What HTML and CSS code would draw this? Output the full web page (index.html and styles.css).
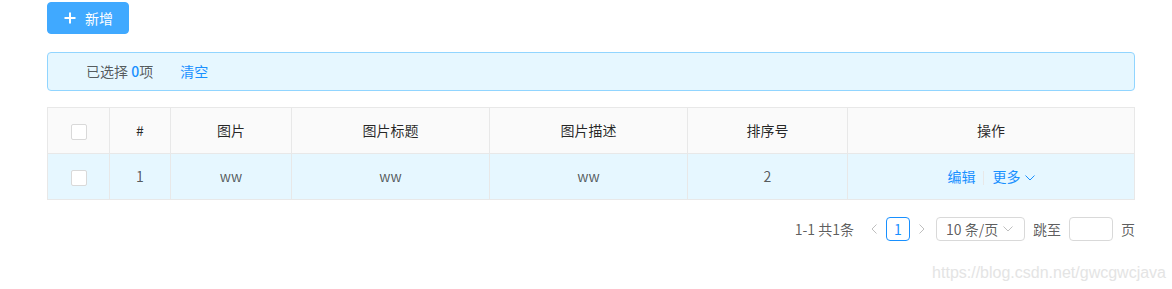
FILE: index.html
```html
<!DOCTYPE html>
<html lang="zh-CN">
<head>
  <meta charset="UTF-8" />
  <title>图片管理</title>
  <link rel="stylesheet" href="styles.css">
</head>
<body>
  <div class="page">
    <div class="toolbar">
      <button class="btn-primary">
        <svg class="icon-plus" width="12" height="12" viewBox="0 0 12 12"><path d="M6 0.5v11M0.5 6h11" stroke="#fff" stroke-width="2" fill="none"/></svg>
        <span>新增</span>
      </button>
    </div>

    <div class="alert">
      已选择 <a class="count">0</a>项
      <a class="link clear">清空</a>
    </div>

    <table class="grid">
      <colgroup>
        <col style="width:62px"><col style="width:61px"><col style="width:121px"><col style="width:198px"><col style="width:198px"><col style="width:160px"><col>
      </colgroup>
      <thead>
        <tr>
          <th><span class="checkbox"></span></th>
          <th>#</th>
          <th>图片</th>
          <th>图片标题</th>
          <th>图片描述</th>
          <th>排序号</th>
          <th>操作</th>
        </tr>
      </thead>
      <tbody>
        <tr class="selected">
          <td><span class="checkbox"></span></td>
          <td>1</td>
          <td>ww</td>
          <td>ww</td>
          <td>ww</td>
          <td>2</td>
          <td>
            <a class="link">编辑</a><span class="divider"></span><a class="link">更多
              <svg class="icon-down" width="10" height="6" viewBox="0 0 10 6"><polyline points="0.5,0.5 5,5 9.5,0.5" stroke="#1890ff" stroke-width="1" fill="none"/></svg></a>
          </td>
        </tr>
      </tbody>
    </table>

    <div class="pagination">
      <span class="total">1-1 共1条</span>
      <span class="pager-arrow">
        <svg width="6" height="10" viewBox="0 0 6 10"><polyline points="5.5,0.5 1,5 5.5,9.5" stroke="#bfbfbf" fill="none"/></svg>
      </span>
      <span class="pager-item active">1</span>
      <span class="pager-arrow">
        <svg width="6" height="10" viewBox="0 0 6 10"><polyline points="0.5,0.5 5,5 0.5,9.5" stroke="#bfbfbf" fill="none"/></svg>
      </span>
      <span class="size-select">10 条/页
        <svg width="10" height="6" viewBox="0 0 10 6"><polyline points="0.5,0.5 5,5 9.5,0.5" stroke="#bfbfbf" fill="none"/></svg>
      </span>
      <span class="jumper">跳至<input type="text" class="jump-input">页</span>
    </div>
  </div>

  <div class="watermark">https://blog.csdn.net/gwcgwcjava</div>
</body>
</html>
```

FILE: styles.css
```css
body {
  margin: 0;
  font-family: "Noto Sans CJK SC", "Microsoft YaHei", sans-serif;
  font-size: 14px;
  line-height: 21px;
  color: rgba(0,0,0,0.65);
  background: #fff;
}

.page {
  padding: 2px 37px 0 47px;
}

.btn-primary {
  display: flex;
  align-items: center;
  gap: 9px;
  height: 32px;
  padding: 0 15px 0 16px;
  background-color: #40a9ff;
  border: 1px solid #40a9ff;
  border-radius: 4px;
  color: #fff;
  font-family: inherit;
  font-size: 14px;
  cursor: pointer;
}

.alert {
  margin-top: 18px;
  padding: 8px 15px 8px 38px;
  background: #e6f7ff;
  border: 1px solid #91d5ff;
  border-radius: 4px;
  color: rgba(0,0,0,0.65);
}
.count {
  color: #1890ff;
  font-weight: 500;
}
.link {
  color: #1890ff;
  cursor: pointer;
}
.clear {
  margin-left: 24px;
}

.grid {
  width: 100%;
  margin-top: 16px;
  border-collapse: collapse;
  table-layout: fixed;
  border: 1px solid #e8e8e8;
}
.grid th, .grid td {
  padding: 12px 8px;
  text-align: center;
  border-right: 1px solid #e8e8e8;
  border-bottom: 1px solid #e8e8e8;
}
.grid th {
  background: #fafafa;
  color: rgba(0,0,0,0.85);
  font-weight: normal;
}
.grid tr.selected td {
  background: #e6f7ff;
}

.checkbox {
  display: inline-block;
  width: 16px;
  height: 16px;
  box-sizing: border-box;
  border: 1px solid #d9d9d9;
  border-radius: 2px;
  background: #fff;
  vertical-align: middle;
  margin-left: 1px;
}

.divider {
  display: inline-block;
  width: 1px;
  height: 14px;
  margin: 0 8px;
  background: #e8e8e8;
  vertical-align: middle;
}
.icon-down {
  margin-left: 1px;
  vertical-align: middle;
}

.pagination {
  display: flex;
  justify-content: flex-end;
  align-items: center;
  margin-top: 17px;
  height: 24px;
}
.total {
  margin-right: 8px;
}
.pager-arrow {
  display: flex;
  align-items: center;
  justify-content: center;
  width: 24px;
  height: 24px;
}
.pager-item {
  box-sizing: border-box;
  width: 24px;
  height: 24px;
  line-height: 22px;
  text-align: center;
  border: 1px solid #d9d9d9;
  border-radius: 4px;
}
.pager-item.active {
  border-color: #1890ff;
  color: #1890ff;
}
.size-select {
  box-sizing: border-box;
  display: flex;
  align-items: center;
  justify-content: space-between;
  width: 89px;
  height: 24px;
  margin-left: 2px;
  padding: 0 11px 0 9px;
  border: 1px solid #d9d9d9;
  border-radius: 4px;
}
.jumper {
  display: flex;
  align-items: center;
  margin-left: 8px;
}
.jump-input {
  box-sizing: border-box;
  width: 44px;
  height: 24px;
  margin: 0 8px;
  border: 1px solid #d9d9d9;
  border-radius: 4px;
}

.watermark {
  position: absolute;
  right: 6px;
  top: 262px;
  font-family: "Liberation Sans", Arial, sans-serif;
  font-size: 16px;
  color: #e4e4e4;
}
```
